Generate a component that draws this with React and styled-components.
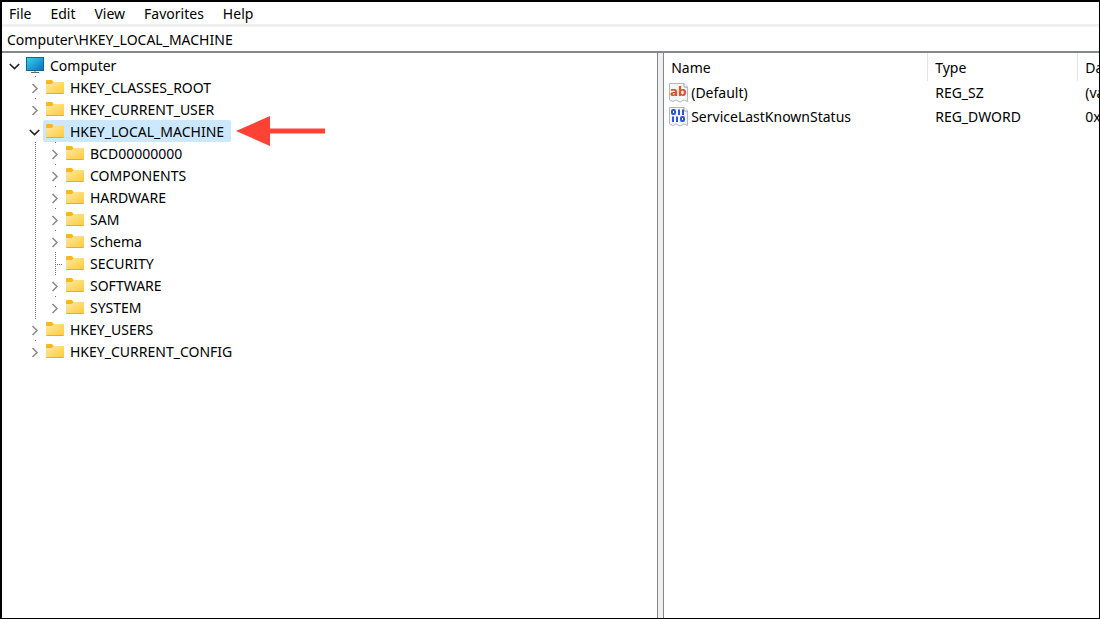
import React, { useState } from 'react';
import styled, { createGlobalStyle } from 'styled-components';

const GlobalStyle = createGlobalStyle`
  * {
    box-sizing: border-box;
  }

  body {
    margin: 0;
    background: #fff;
    color: #000;
    font-family: "Noto Sans", "Open Sans", sans-serif;
    font-size: 14px;
    line-height: 22px;
  }

  button,
  input {
    padding: 0;
    border: none;
    background: none;
    color: inherit;
    font: inherit;
  }
`;

const Window = styled.div`
  display: flex;
  flex-direction: column;
  height: 100vh;
  overflow: hidden;
  border: 1px solid #000;
  border-width: 2px 1px 1px 2px;
`;

const MenuBar = styled.nav`
  display: flex;
  gap: 19px;
  height: 22px;
  padding: 1px 7px 0;
`;

const MenuButton = styled.button`
  height: 22px;
`;

const AddressInput = styled.input`
  flex: none;
  width: 100%;
  height: 27px;
  padding: 0 5px;
  border-top: 3px solid #f0f0f0;
  outline: none;
`;

const Panes = styled.main`
  display: flex;
  flex: 1;
  min-height: 0;
  border-top: 2px solid #828790;
`;

const TreePane = styled.section`
  flex: 0 0 calc(60% - 3px);
  overflow: hidden;
  padding: 1px;
`;

const Splitter = styled.div`
  flex: none;
  width: 7px;
  border: 1px solid #828790;
  border-width: 0 1px;
  background: #f0f0f0;
  cursor: col-resize;
`;

const ValuesPane = styled.section`
  flex: 1;
  min-width: 0;
  overflow: hidden;
`;

const TreeList = styled.ul`
  margin: 0;
  padding: 0;
  list-style: none;
`;

const TreeRow = styled.div`
  display: flex;
  align-items: center;
  height: 22px;
`;

const dots = 'repeating-linear-gradient(#707070 0 1px, transparent 1px 2px)';

const Guide = styled.span`
  flex: none;
  width: 20px;
  height: 22px;
  background: ${(props) => (props.$line ? dots : 'none')} 12px 0 / 1px 22px no-repeat;
`;

const LeafGuide = styled(Guide)`
  background:
    ${dots} 12px 0 / 1px 22px no-repeat,
    repeating-linear-gradient(90deg, #707070 0 1px, transparent 1px 2px) 12px 12px / 8px 1px no-repeat;
`;

const Expander = styled.button`
  display: flex;
  flex: none;
  align-items: center;
  justify-content: flex-end;
  width: 20px;
  height: 22px;
  padding: 2px 3px 0 0;
  color: ${(props) => (props.$open ? '#202020' : '#8c8c8c')};
  background: ${(props) => (props.$open ? 'none' : dots)} 12px 0 / 1px 1px no-repeat;
`;

const KeyItem = styled.div`
  position: relative;
  display: flex;
  align-items: center;
  gap: 6px;
  height: 22px;
  padding: 0 7px 0 3px;
  border-radius: 2px;
  background: ${(props) => (props.$selected ? '#cce8ff' : 'transparent')};
  white-space: nowrap;
`;

const KeyName = styled.span`
  padding-top: 2px;
`;

const Pointer = styled.svg`
  position: absolute;
  top: -4px;
  left: calc(100% + 5px);
`;

const ValueTable = styled.table`
  width: 100%;
  table-layout: fixed;
  border-collapse: separate;
  border-spacing: 0;
  white-space: nowrap;
`;

const HeadCell = styled.th`
  width: ${(props) => props.$width};
  height: 28px;
  padding: 1px 6px 0 7px;
  border-right: 1px solid #e5e5e5;
  font-weight: 400;
  text-align: left;

  &:last-child {
    border-right: none;
  }
`;

const Cell = styled.td`
  height: 24px;
  padding: 0 6px 0 7px;
  overflow: hidden;
`;

const NameCell = styled(Cell)`
  padding-left: 5px;
`;

const ValueName = styled.div`
  display: flex;
  align-items: center;
  gap: 2px;
`;

const ChevronIcon = ({ open }) => (
  <svg width="11" height="11" viewBox="0 0 11 11" fill="none" stroke="currentColor" strokeWidth="1.6">
    {open ? <path d="M0.8 3 L5.5 7.6 L10.2 3" /> : <path d="M3.5 1 L8 5.5 L3.5 10" />}
  </svg>
);

const FolderIcon = () => (
  <svg width="18" height="16" viewBox="0 0 18 16">
    <defs>
      <linearGradient id="folder" x1="0" y1="0" x2="1" y2="1">
        <stop offset="0" stopColor="#ffe9a2" />
        <stop offset="1" stopColor="#ffcb3f" />
      </linearGradient>
    </defs>
    <path d="M0 2 Q0 1 1 1 H6 L7.5 3 H17 Q18 3 18 4 V8 H0 Z" fill="#f9b81a" />
    <path d="M0 5 H6 L7.5 3 H17 Q18 3 18 4 V14 H0 Z" fill="url(#folder)" />
    <path d="M0 14 H18 Q18 15 17 15 H1 Q0 15 0 14 Z" fill="#e6ac2c" />
  </svg>
);

const ComputerIcon = () => (
  <svg width="18" height="16" viewBox="0 0 18 16">
    <defs>
      <linearGradient id="screen" x1="0" y1="0" x2="1" y2="1">
        <stop offset="0" stopColor="#35d6e8" />
        <stop offset="1" stopColor="#0b6cc4" />
      </linearGradient>
    </defs>
    <rect x="0.5" y="0.5" width="17" height="13" fill="url(#screen)" stroke="#15658f" />
    <path d="M8 14 H10 V15 H8 Z" fill="#a9b4bc" />
    <path d="M5 15 H13 V16 H5 Z" fill="#5c6870" />
  </svg>
);

const Page = () => (
  <>
    <path d="M0.5 0.5 H15 L18.5 4 V18.5 L15 17 L11 19 L7 17 L4 18.5 L0.5 17 Z" fill="#f4f5f6" stroke="#b4b8bb" />
    <path d="M15 0.5 V4 H18.5" fill="#fff" stroke="#9da2a6" />
  </>
);

const StringIcon = () => (
  <svg width="20" height="20" viewBox="0 0 20 20">
    <Page />
    <text x="1" y="13" fontFamily="DejaVu Sans, sans-serif" fontSize="12" fontWeight="700" fill="#d9512c">ab</text>
  </svg>
);

const BinaryIcon = () => (
  <svg width="20" height="20" viewBox="0 0 20 20">
    <Page />
    <g fill="none" stroke="#2f55d8" strokeWidth="2">
      <rect x="3" y="3" width="3" height="4" rx="1" />
      <path d="M9 3.5 H10 M10 2.5 V8 M13 3.5 H14 M14 2.5 V8" />
      <path d="M3 10.5 H4 M4 9.5 V15 M7 10.5 H8 M8 9.5 V15" />
      <rect x="12" y="10" width="3" height="4" rx="1" />
    </g>
  </svg>
);

const RedArrow = () => (
  <Pointer width="89" height="30" viewBox="0 0 89 30" aria-hidden="true">
    <path d="M0 15 L34 0 V12.5 H89 V17.5 H34 V30 Z" fill="#ff4236" />
  </Pointer>
);

const menus = ['File', 'Edit', 'View', 'Favorites', 'Help'];

const registry = {
  name: 'Computer',
  children: [
    { name: 'HKEY_CLASSES_ROOT', children: [] },
    { name: 'HKEY_CURRENT_USER', children: [] },
    {
      name: 'HKEY_LOCAL_MACHINE',
      marked: true,
      children: [
        { name: 'BCD00000000', children: [] },
        { name: 'COMPONENTS', children: [] },
        { name: 'HARDWARE', children: [] },
        { name: 'SAM', children: [] },
        { name: 'Schema', children: [] },
        { name: 'SECURITY' },
        { name: 'SOFTWARE', children: [] },
        { name: 'SYSTEM', children: [] },
      ],
    },
    { name: 'HKEY_USERS', children: [] },
    { name: 'HKEY_CURRENT_CONFIG', children: [] },
  ],
};

const values = [
  { name: '(Default)', type: 'REG_SZ', data: '(value not set)', icon: StringIcon },
  { name: 'ServiceLastKnownStatus', type: 'REG_DWORD', data: '0x00000002 (2)', icon: BinaryIcon },
];

const TreeNode = ({ node, depth, selected, onSelect }) => {
  const [open, setOpen] = useState(Boolean(node.children && node.children.length));
  const isSelected = node.name === selected;

  return (
    <li role="treeitem" aria-expanded={node.children ? open : undefined} aria-selected={isSelected}>
      <TreeRow>
        {Array.from({ length: depth }, (_, i) => (
          <Guide key={i} $line={i > 0} />
        ))}
        {node.children ? (
          <Expander $open={open} aria-label={`Toggle ${node.name}`} onClick={() => setOpen(!open)}>
            <ChevronIcon open={open} />
          </Expander>
        ) : (
          <LeafGuide />
        )}
        <KeyItem $selected={isSelected} onClick={() => onSelect(node.name)}>
          {depth === 0 ? <ComputerIcon /> : <FolderIcon />}
          <KeyName>{node.name}</KeyName>
          {node.marked && <RedArrow />}
        </KeyItem>
      </TreeRow>
      {open && node.children && (
        <TreeList role="group">
          {node.children.map((child) => (
            <TreeNode key={child.name} node={child} depth={depth + 1} selected={selected} onSelect={onSelect} />
          ))}
        </TreeList>
      )}
    </li>
  );
};

const App = () => {
  const [selected, setSelected] = useState('HKEY_LOCAL_MACHINE');
  const [address, setAddress] = useState('Computer\\HKEY_LOCAL_MACHINE');

  return (
    <Window>
      <GlobalStyle />
      <MenuBar>
        {menus.map((menu) => (
          <MenuButton key={menu}>{menu}</MenuButton>
        ))}
      </MenuBar>
      <AddressInput aria-label="Address" value={address} onChange={(event) => setAddress(event.target.value)} />
      <Panes>
        <TreePane>
          <TreeList role="tree">
            <TreeNode node={registry} depth={0} selected={selected} onSelect={setSelected} />
          </TreeList>
        </TreePane>
        <Splitter />
        <ValuesPane>
          <ValueTable>
            <thead>
              <tr>
                <HeadCell $width="264px">Name</HeadCell>
                <HeadCell $width="150px">Type</HeadCell>
                <HeadCell>Data</HeadCell>
              </tr>
            </thead>
            <tbody>
              {values.map(({ name, type, data, icon: Icon }) => (
                <tr key={name}>
                  <NameCell>
                    <ValueName>
                      <Icon />
                      {name}
                    </ValueName>
                  </NameCell>
                  <Cell>{type}</Cell>
                  <Cell>{data}</Cell>
                </tr>
              ))}
            </tbody>
          </ValueTable>
        </ValuesPane>
      </Panes>
    </Window>
  );
};

export default App;
